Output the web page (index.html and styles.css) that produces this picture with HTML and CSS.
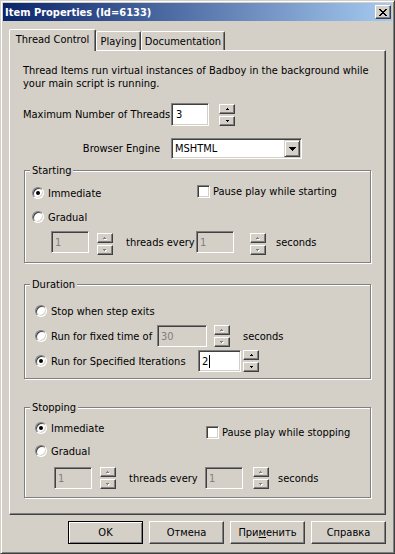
FILE: index.html
```html
<!DOCTYPE html>
<html>
<head>
<meta charset="utf-8">
<title>Item Properties</title>
<link rel="stylesheet" href="styles.css">
</head>
<body>
<div class="window">
  <div class="titlebar">
    <span class="title">Item Properties (Id=6133)</span>
    <span class="close"><svg width="8" height="7" viewBox="0 0 8 7" shape-rendering="crispEdges"><path d="M0 0h2v1H0z M6 0h2v1H6z M1 1h2v1H1z M5 1h2v1H5z M2 2h4v1H2z M3 3h2v1H3z M2 4h4v1H2z M1 5h2v1H1z M5 5h2v1H5z M0 6h2v1H0z M6 6h2v1H6z" fill="#000"/></svg></span>
  </div>
  <div class="main">
    <div class="tabs">
      <div class="tab active t1">Thread Control</div>
      <div class="tab t2">Playing</div>
      <div class="tab t3">Documentation</div>
    </div>
    <div class="panel">
      <p class="desc">Thread Items run virtual instances of Badboy in the background while<br>your main script is running.</p>

      <div class="row threads">
        <span class="lbl">Maximum Number of Threads</span>
        <span class="edit tall w38">3</span>
        <span class="spin ml10">
          <span class="sb"><svg width="3" height="2" viewBox="0 0 3 2" shape-rendering="crispEdges"><path d="M1 0h1v1H1z M0 1h3v1H0z" fill="#000"/></svg></span>
          <span class="sb"><svg width="3" height="2" viewBox="0 0 3 2" shape-rendering="crispEdges"><path d="M0 0h3v1H0z M1 1h1v1H1z" fill="#000"/></svg></span>
        </span>
      </div>

      <div class="row engine">
        <span class="lbl right">Browser Engine</span>
        <span class="combo">
          <span class="combo-text">MSHTML</span>
          <span class="combo-btn"><svg width="7" height="4" viewBox="0 0 7 4" shape-rendering="crispEdges"><path d="M0 0h7v1H0z M1 1h5v1H1z M2 2h3v1H2z M3 3h1v1H3z" fill="#000"/></svg></span>
        </span>
      </div>

      <fieldset class="group starting">
        <legend class="legend">Starting</legend>
        <div class="grow">
          <span class="opt ml7 w165"><span class="radio on"></span><span>Immediate</span></span>
          <span class="chkopt up"><span class="check"></span><span>Pause play while starting</span></span>
        </div>
        <div class="grow">
          <span class="opt ml7"><span class="radio"></span><span>Gradual</span></span>
        </div>
        <div class="grow mt1">
          <span class="edit dis w38 ml26">1</span>
          <span class="spin dis ml8 low">
            <span class="sb"><svg width="4" height="3" viewBox="0 0 4 3" shape-rendering="crispEdges"><path d="M2 1h1v1H2z M1 2h3v1H1z" fill="#fff"/><path d="M1 0h1v1H1z M0 1h3v1H0z" fill="#808080"/></svg></span>
            <span class="sb"><svg width="4" height="3" viewBox="0 0 4 3" shape-rendering="crispEdges"><path d="M1 1h3v1H1z M2 2h1v1H2z" fill="#fff"/><path d="M0 0h3v1H0z M1 1h1v1H1z" fill="#808080"/></svg></span>
          </span>
          <span class="txt ml13 w70">threads every</span>
          <span class="edit dis w38">1</span>
          <span class="spin dis ml16 low">
            <span class="sb"><svg width="4" height="3" viewBox="0 0 4 3" shape-rendering="crispEdges"><path d="M2 1h1v1H2z M1 2h3v1H1z" fill="#fff"/><path d="M1 0h1v1H1z M0 1h3v1H0z" fill="#808080"/></svg></span>
            <span class="sb"><svg width="4" height="3" viewBox="0 0 4 3" shape-rendering="crispEdges"><path d="M1 1h3v1H1z M2 2h1v1H2z" fill="#fff"/><path d="M0 0h3v1H0z M1 1h1v1H1z" fill="#808080"/></svg></span>
          </span>
          <span class="txt ml10">seconds</span>
        </div>
      </fieldset>

      <fieldset class="group duration">
        <legend class="legend">Duration</legend>
        <div class="grow">
          <span class="opt ml10"><span class="radio"></span><span>Stop when step exits</span></span>
        </div>
        <div class="grow mt1">
          <span class="opt ml10"><span class="radio"></span><span class="w106">Run for fixed time of</span></span>
          <span class="edit dis w50">30</span>
          <span class="spin dis ml7">
            <span class="sb"><svg width="4" height="3" viewBox="0 0 4 3" shape-rendering="crispEdges"><path d="M2 1h1v1H2z M1 2h3v1H1z" fill="#fff"/><path d="M1 0h1v1H1z M0 1h3v1H0z" fill="#808080"/></svg></span>
            <span class="sb"><svg width="4" height="3" viewBox="0 0 4 3" shape-rendering="crispEdges"><path d="M1 1h3v1H1z M2 2h1v1H2z" fill="#fff"/><path d="M0 0h3v1H0z M1 1h1v1H1z" fill="#808080"/></svg></span>
          </span>
          <span class="txt ml13">seconds</span>
        </div>
        <div class="grow mt1">
          <span class="opt ml10"><span class="radio on"></span><span class="w147">Run for Specified Iterations</span></span>
          <span class="edit w43">2<span class="caret"></span></span>
          <span class="spin ml2">
            <span class="sb"><svg width="3" height="2" viewBox="0 0 3 2" shape-rendering="crispEdges"><path d="M1 0h1v1H1z M0 1h3v1H0z" fill="#000"/></svg></span>
            <span class="sb"><svg width="3" height="2" viewBox="0 0 3 2" shape-rendering="crispEdges"><path d="M0 0h3v1H0z M1 1h1v1H1z" fill="#000"/></svg></span>
          </span>
        </div>
      </fieldset>

      <fieldset class="group stopping">
        <legend class="legend">Stopping</legend>
        <div class="grow">
          <span class="opt ml10 w171"><span class="radio on"></span><span>Immediate</span></span>
          <span class="chkopt down"><span class="check"></span><span>Pause play while stopping</span></span>
        </div>
        <div class="grow h22">
          <span class="opt ml10"><span class="radio"></span><span>Gradual</span></span>
        </div>
        <div class="grow mt4">
          <span class="edit dis w38 ml29">1</span>
          <span class="spin dis ml8">
            <span class="sb"><svg width="4" height="3" viewBox="0 0 4 3" shape-rendering="crispEdges"><path d="M2 1h1v1H2z M1 2h3v1H1z" fill="#fff"/><path d="M1 0h1v1H1z M0 1h3v1H0z" fill="#808080"/></svg></span>
            <span class="sb"><svg width="4" height="3" viewBox="0 0 4 3" shape-rendering="crispEdges"><path d="M1 1h3v1H1z M2 2h1v1H2z" fill="#fff"/><path d="M0 0h3v1H0z M1 1h1v1H1z" fill="#808080"/></svg></span>
          </span>
          <span class="txt ml13 w76">threads every</span>
          <span class="edit dis w38">1</span>
          <span class="spin dis ml10">
            <span class="sb"><svg width="4" height="3" viewBox="0 0 4 3" shape-rendering="crispEdges"><path d="M2 1h1v1H2z M1 2h3v1H1z" fill="#fff"/><path d="M1 0h1v1H1z M0 1h3v1H0z" fill="#808080"/></svg></span>
            <span class="sb"><svg width="4" height="3" viewBox="0 0 4 3" shape-rendering="crispEdges"><path d="M1 1h3v1H1z M2 2h1v1H2z" fill="#fff"/><path d="M0 0h3v1H0z M1 1h1v1H1z" fill="#808080"/></svg></span>
          </span>
          <span class="txt ml9">seconds</span>
        </div>
      </fieldset>
    </div>

    <div class="buttons">
      <span class="btn default">OK</span>
      <span class="btn">Отмена</span>
      <span class="btn">При<u>м</u>енить</span>
      <span class="btn">Справка</span>
    </div>
  </div>
</div>
</body>
</html>
```

FILE: styles.css
```css
* { box-sizing: border-box; }
html, body { margin: 0; padding: 0; }
body {
  background: #D4D0C8;
  font-family: "DejaVu Sans Condensed", "Liberation Sans", sans-serif;
  font-size: 11px;
  line-height: 13px;
  color: #000;
}

.window {
  width: 395px;
  height: 554px;
  border: 1px solid;
  border-color: #D4D0C8 #404040 #404040 #D4D0C8;
  box-shadow: inset 1px 1px #fff, inset -1px -1px #808080;
  padding: 2px;
  display: flex;
  flex-direction: column;
}

.titlebar {
  height: 18px;
  display: flex;
  align-items: center;
  background: linear-gradient(to right, #0A246A, #A6CAF0);
  padding-left: 2px;
}
.title {
  flex: 1;
  color: #fff;
  font-weight: bold;
  white-space: nowrap;
}
.close {
  width: 16px;
  height: 14px;
  margin-right: 1px;
  background: #D4D0C8;
  border: 1px solid;
  border-color: #fff #404040 #404040 #fff;
  box-shadow: inset -1px -1px #808080;
  display: flex;
  align-items: center;
  justify-content: center;
}

.main {
  display: flex;
  flex-direction: column;
  padding: 0 6px;
}

.tabs {
  display: flex;
  align-items: flex-end;
  height: 21px;
  margin-top: 8px;
}
.tab {
  height: 19px;
  padding-top: 3px;
  text-align: center;
  white-space: nowrap;
  border: 1px solid;
  border-bottom: none;
  border-color: #fff #404040 transparent #fff;
  box-shadow: inset -1px 0 #808080;
  border-radius: 2px 2px 0 0;
  background: #D4D0C8;
}
.tab.active {
  height: 22px;
  margin-bottom: -1px;
  position: relative;
  z-index: 1;
}
.t1 { width: 87px; }
.t2 { width: 45px; }
.t3 { width: 84px; }

.panel {
  height: 465px;
  border: 1px solid;
  border-color: #fff #404040 #404040 #fff;
  box-shadow: inset -1px -1px #808080;
  display: flex;
  flex-direction: column;
  align-items: flex-start;
}

.desc {
  margin: 13px 0 0 13px;
  white-space: nowrap;
}

.row {
  display: flex;
  align-items: center;
  margin-left: 13px;
}
.threads { margin-top: 13px; height: 23px; }
.engine { margin-top: 12px; height: 21px; }
.lbl { width: 148px; white-space: nowrap; }
.lbl.right { text-align: right; padding-right: 11px; }

.edit {
  height: 22px;
  display: flex;
  align-items: center;
  padding-left: 3px;
  background: #fff;
  border: 1px solid;
  border-color: #808080 #fff #fff #808080;
  box-shadow: inset 1px 1px #404040, inset -1px -1px #D4D0C8;
  flex: none;
}
.edit.tall { height: 23px; padding-left: 4px; }
.edit.dis { background: #D4D0C8; color: #808080; }
.caret { display: inline-block; width: 1px; height: 13px; background: #000; margin-left: 1px; }

.spin {
  width: 16px;
  height: 22px;
  display: flex;
  flex-direction: column;
  justify-content: space-between;
  flex: none;
}
.spin.low { margin-top: 4px; }
.sb {
  height: 10px;
  display: flex;
  align-items: center;
  justify-content: center;
  background: #D4D0C8;
  border: 1px solid;
  border-color: #fff #404040 #404040 #fff;
  box-shadow: inset -1px -1px #808080;
}

.combo {
  width: 131px;
  height: 21px;
  display: flex;
  align-items: center;
  background: #fff;
  border: 1px solid;
  border-color: #808080 #fff #fff #808080;
  box-shadow: inset 1px 1px #404040, inset -1px -1px #D4D0C8;
  padding: 1px;
}
.combo-text { flex: 1; padding-left: 2px; }
.combo-btn {
  width: 16px;
  height: 17px;
  display: flex;
  align-items: center;
  justify-content: center;
  background: #D4D0C8;
  border: 1px solid;
  border-color: #D4D0C8 #404040 #404040 #D4D0C8;
  box-shadow: inset 1px 1px #fff, inset -1px -1px #808080;
}

.group {
  margin: 0 0 0 14px;
  width: 347px;
  min-inline-size: 0;
  border: 1px solid #808080;
  box-shadow: inset 1px 1px #fff, 1px 1px #fff;
}
.legend {
  margin-left: 5px;
  padding: 0 2px;
  line-height: 13px;
  background: #D4D0C8;
}
.starting { margin-top: 5px; padding: 4px 0 8px; }
.duration { margin-top: 15px; padding: 8px 0 5px; }
.stopping { margin-top: 22px; padding: 2px 0 7px; }

.grow {
  display: flex;
  align-items: center;
  height: 24px;
  white-space: nowrap;
}
.h22 { height: 22px; }
.mt1 { margin-top: 1px; }
.mt4 { margin-top: 4px; }

.opt { display: flex; align-items: center; gap: 4px; flex: none; }
.chkopt { display: flex; align-items: center; gap: 3px; }
.chkopt.up { margin-bottom: 3px; }
.chkopt.down { margin-top: 8px; }

.radio {
  width: 12px;
  height: 12px;
  border-radius: 50%;
  background: #fff;
  border: 1px solid;
  border-color: #808080 #fff #fff #808080;
  box-shadow: inset 1px 1px #404040, inset -1px -1px #D4D0C8;
  display: flex;
  align-items: center;
  justify-content: center;
  flex: none;
}
.radio.on::after {
  content: "";
  width: 4px;
  height: 4px;
  border-radius: 50%;
  background: #000;
}
.check {
  width: 13px;
  height: 13px;
  background: #fff;
  border: 1px solid;
  border-color: #808080 #fff #fff #808080;
  box-shadow: inset 1px 1px #404040, inset -1px -1px #D4D0C8;
  flex: none;
}

.txt { flex: none; }
.ml2 { margin-left: 2px; }
.ml7 { margin-left: 7px; }
.ml8 { margin-left: 8px; }
.ml9 { margin-left: 9px; }
.ml10 { margin-left: 10px; }
.ml13 { margin-left: 13px; }
.ml16 { margin-left: 16px; }
.ml26 { margin-left: 26px; }
.ml29 { margin-left: 29px; }
.w38 { width: 38px; }
.w43 { width: 43px; }
.w50 { width: 50px; }
.w70 { width: 70px; }
.w76 { width: 76px; }
.w106 { width: 106px; }
.w147 { width: 147px; }
.w165 { width: 165px; }
.w171 { width: 171px; }

.buttons {
  display: flex;
  justify-content: flex-end;
  gap: 6px;
  margin-top: 6px;
}
.btn {
  width: 75px;
  height: 23px;
  display: flex;
  align-items: center;
  justify-content: center;
  background: #D4D0C8;
  border: 1px solid;
  border-color: #fff #404040 #404040 #fff;
  box-shadow: inset -1px -1px #808080;
}
.btn.default {
  border-color: #000;
  box-shadow: inset 1px 1px #fff, inset -1px -1px #808080;
}
```
